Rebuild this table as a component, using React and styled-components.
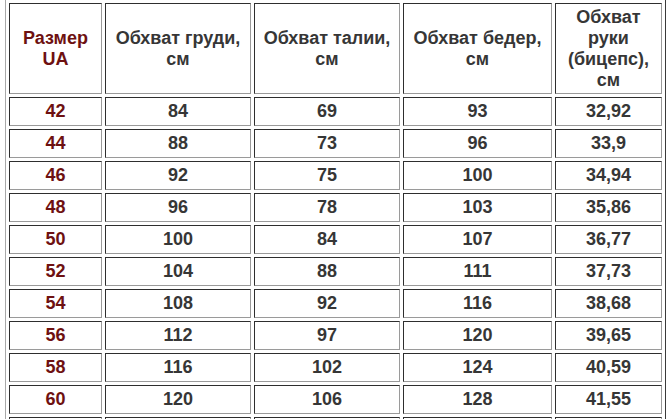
import React from "react";
import styled, { createGlobalStyle } from "styled-components";

const GlobalStyle = createGlobalStyle`
  html, body {
    margin: 0;
    padding: 0;
    background: #ffffff;
  }
  body {
    font-family: "Liberation Sans", Arial, sans-serif;
  }
`;

const Page = styled.div`
  padding-left: 5px;
  height: 419px;
  overflow: hidden;
`;

const Table = styled.table`
  table-layout: fixed;
  border-collapse: separate;
  border-spacing: 3px;
  border-style: solid;
  border-width: 0 1px 1px 1px;
  border-color: #a8a8a8 #3a3a3a #3a3a3a #a8a8a8;
  width: 661px;
`;

const Cell = styled.td`
  box-sizing: border-box;
  width: ${(p) => p.$w}px;
  height: 29px;
  padding: 0 2px;
  border-style: solid;
  border-width: 1px;
  border-color: #2e2e2e #9a9a9a #9a9a9a #2e2e2e;
  text-align: center;
  vertical-align: middle;
  font-size: 18px;
  font-weight: bold;
  line-height: 21px;
  color: ${(p) => (p.$accent ? "#6e1111" : "#363636")};
`;

const HeadCell = styled(Cell).attrs({ as: "th" })`
  height: 91px;
`;

const widths = [93, 146, 146, 149, 107];

const headers = [
  ["Размер", "UA"],
  ["Обхват груди,", "см"],
  ["Обхват талии,", "см"],
  ["Обхват бедер,", "см"],
  ["Обхват", "руки", "(бицепс),", "см"],
];

// last row only shows its top edge in the screenshot
const rows = [
  ["42", "84", "69", "93", "32,92"],
  ["44", "88", "73", "96", "33,9"],
  ["46", "92", "75", "100", "34,94"],
  ["48", "96", "78", "103", "35,86"],
  ["50", "100", "84", "107", "36,77"],
  ["52", "104", "88", "111", "37,73"],
  ["54", "108", "92", "116", "38,68"],
  ["56", "112", "97", "120", "39,65"],
  ["58", "116", "102", "124", "40,59"],
  ["60", "120", "106", "128", "41,55"],
  ["", "", "", "", ""],
];

const App = () => {
  return (
    <Page>
      <GlobalStyle />
      <Table>
        <thead>
          <tr>
            {headers.map((lines, i) => (
              <HeadCell key={i} $w={widths[i]} $accent={i === 0}>
                {lines.map((line, j) => (
                  <React.Fragment key={j}>
                    {j > 0 && <br />}
                    {line}
                  </React.Fragment>
                ))}
              </HeadCell>
            ))}
          </tr>
        </thead>
        <tbody>
          {rows.map((row, r) => (
            <tr key={r}>
              {row.map((value, i) => (
                <Cell key={i} $w={widths[i]} $accent={i === 0}>
                  {value}
                </Cell>
              ))}
            </tr>
          ))}
        </tbody>
      </Table>
    </Page>
  );
};

export default App;
